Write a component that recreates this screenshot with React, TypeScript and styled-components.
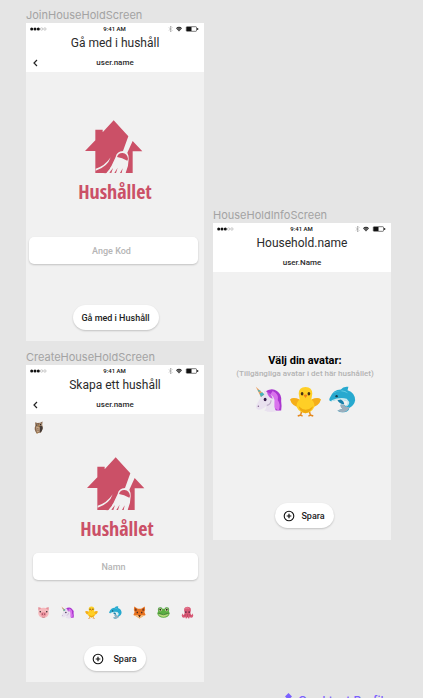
import React from "react";
import styled, { createGlobalStyle } from "styled-components";

const GlobalStyle = createGlobalStyle`
  * { box-sizing: border-box; }
  body { margin: 0; background: #e5e5e5; font-family: Roboto, "Liberation Sans", sans-serif; color: #2b2b2b; }
  h1, h2, p { margin: 0; }
`;

const Board = styled.main`
  display: grid;
  grid-template-columns: 1fr 1fr;
  column-gap: 9px;
  height: 100vh;
  overflow: hidden;
  padding: 8px 32px 0 26px;
`;
const Column = styled.div<{ $top?: number }>`
  display: flex;
  flex-direction: column;
  min-width: 0;
  padding-top: ${(p) => p.$top ?? 0}px;
`;
const FrameName = styled.p`
  font: 400 11px/15px Inter, sans-serif;
  color: #a3a3a3;
  white-space: nowrap;
`;
const Phone = styled.section<{ $pad: number }>`
  display: flex;
  flex-direction: column;
  align-items: stretch;
  background: #f1f1f1;
  margin-bottom: 9px;
  padding-bottom: ${(p) => p.$pad}px;
`;
const Header = styled.header`
  background: #fff;
  height: 49px;
  display: flex;
  flex-direction: column;
`;
const StatusBar = styled.div`
  display: grid;
  grid-template-columns: 1fr auto 1fr;
  align-items: center;
  height: 12px;
  padding: 0 5px 0 4px;
  font: 500 6px/12px Roboto, sans-serif;
  color: #111;
`;
const StatusIcons = styled.svg`
  justify-self: end;
  display: block;
`;
const Title = styled.h1`
  font-size: 12px;
  line-height: 16px;
  font-weight: 400;
  text-align: center;
`;
const UserRow = styled.div`
  display: grid;
  grid-template-columns: 20px 1fr 20px;
  align-items: center;
  height: 19px;
  margin-top: 2px;
`;
const UserName = styled.h2`
  font-size: 8px;
  line-height: 12px;
  font-weight: 500;
  text-align: center;
`;
const BackButton = styled.button`
  border: 0;
  background: none;
  padding: 0 0 0 6px;
  height: 16px;
  display: flex;
  align-items: center;
`;
const LogoBlock = styled.div<{ $top: number; $bottom: number; $shift?: number }>`
  display: flex;
  flex-direction: column;
  align-items: center;
  padding: ${(p) => p.$top}px 0 ${(p) => p.$bottom}px ${(p) => p.$shift ?? 0}px;
`;
const LogoName = styled.p`
  margin-top: 5px;
  font: 700 20px/25px "Liberation Sans Narrow", "Open Sans Condensed", "Liberation Sans", sans-serif;
  color: #cb5067;
`;
const Field = styled.input<{ $left: number }>`
  margin: 0 6px 0 ${(p) => p.$left}px;
  height: 27px;
  min-width: 0;
  border: 0;
  border-radius: 5px;
  background: #fff;
  box-shadow: 0 1px 2px rgba(0, 0, 0, 0.2);
  padding: 0 4px 0 0;
  text-align: center;
  font: 500 9px/12px Roboto, sans-serif;
  &::placeholder { color: #b5b5b5; opacity: 1; }
`;
const PillButton = styled.button<{ $gap?: number; $top: number; $shift?: number }>`
  align-self: center;
  display: flex;
  align-items: center;
  justify-content: center;
  gap: ${(p) => p.$gap ?? 0}px;
  margin-top: ${(p) => p.$top}px;
  margin-left: ${(p) => p.$shift ?? 0}px;
  height: 25px;
  padding: 0 9px 0 8px;
  border: 0;
  border-radius: 13px;
  background: #fff;
  box-shadow: 0 1px 2px rgba(0, 0, 0, 0.2);
  color: #222;
  font: 500 9px/12px Roboto, sans-serif;
  white-space: nowrap;
`;
const AvatarRow = styled.div`
  display: flex;
  justify-content: space-between;
  padding: 0 10px 0 11px;
  margin-top: 26px;
`;
const SelectedAvatar = styled.div`
  padding: 5px 0 0 6px;
  height: 19px;
`;
const Picker = styled.div`
  display: flex;
  flex-direction: column;
  align-items: center;
  padding: 81px 0 0 6px;
`;
const PickerTitle = styled.h2`
  font-size: 11px;
  line-height: 16px;
  font-weight: 700;
  color: #000;
`;
const PickerHint = styled.p`
  font-size: 8px;
  line-height: 10px;
  font-weight: 500;
  color: #b3b3b3;
  white-space: nowrap;
`;
const PickerChoices = styled.div`
  display: flex;
  gap: 8px;
  margin-top: 7px;
`;
const Avatar = styled.button`
  display: flex;
  padding: 0;
  border: 0;
  background: none;
`;
const ComponentName = styled.p`
  display: flex;
  align-items: flex-start;
  gap: 6px;
  margin-top: 144px;
  padding-left: 72px;
  font: 500 12px/15px Inter, sans-serif;
  color: #7b61ff;
  white-space: nowrap;
`;

const Battery = () => (
  <StatusIcons width="32" height="8" viewBox="0 0 32 8" aria-hidden="true">
    <path d="M2 2.5l3 3L3.5 7V1L5 2.5l-3 3" fill="none" stroke="#999" strokeWidth=".6" />
    <path d="M9 3.2Q12 .4 15 3.2L12 6.6Z" fill="#222" />
    <path d="M9.7 4Q12 2 14.3 4M10.8 5.1Q12 4.2 13.2 5.1" fill="none" stroke="#fff" strokeWidth=".4" />
    <rect x="19.3" y="1.7" width="10.2" height="4.6" rx=".7" fill="#fff" stroke="#222" strokeWidth=".6" />
    <path d="M19.5 2h5v4h-5zM30.2 3h1v2h-1z" fill="#111" />
  </StatusIcons>
);
const Signal = () => (
  <svg width="18" height="6" viewBox="0 0 18 6" aria-hidden="true">
    {[1.7, 5, 8.3].map((x) => <circle key={x} cx={x} cy="3" r="1.5" fill="#111" />)}
    {[11.6, 14.9].map((x) => <circle key={x} cx={x} cy="3" r="1.2" fill="none" stroke="#999" strokeWidth=".5" />)}
  </svg>
);

function ScreenHeader({ title, user, back }: { title: string; user: string; back?: boolean }) {
  return (
    <Header>
      <StatusBar><Signal /><span>9:41 AM</span><Battery /></StatusBar>
      <Title>{title}</Title>
      <UserRow>
        {back ? (
          <BackButton aria-label="Tillbaka">
            <svg width="7" height="8" viewBox="0 0 7 8"><path d="M5 1L2 4l3 3" fill="none" stroke="#222" strokeWidth="1.2" /></svg>
          </BackButton>
        ) : <span />}
        <UserName>{user}</UserName>
      </UserRow>
    </Header>
  );
}

function Logo({ top, bottom, shift }: { top: number; bottom: number; shift?: number }) {
  return (
    <LogoBlock $top={top} $bottom={bottom} $shift={shift}>
      <svg width="61" height="54" viewBox="44 31 183 162" aria-hidden="true">
        <path d="M130 32L174 80L158 124Q139 126 136 142Q126 169 108 190H75V124H44L75 92V60H97V68Z" fill="#cb5067" />
        <path d="M187 94L216 125H187V190H166Q175 169 175 149Q176 138 171 129Z" fill="#cb5067" />
        <path d="M140 142Q144 129 157 130Q171 132 173 147Q172 151 171 153Q155 144 140 142Z" fill="#cb5067" />
        <path d="M76 177Q103 170 121 143Q112 172 76 183Z" fill="#f1f1f1" />
        <path d="M76 188Q105 182 126 152L118 178L106 191Z" fill="#cb5067" />
        <path d="M117 189L128 175L123 190ZM132 190L142 174L137 190ZM149 190L157 176L154 190Z" fill="#cb5067" />
      </svg>
      <LogoName>Hushållet</LogoName>
    </LogoBlock>
  );
}

const PlusCircle = () => (
  <svg width="12" height="12" viewBox="0 0 12 12" aria-hidden="true">
    <circle cx="6" cy="6" r="4.8" fill="none" stroke="#111" strokeWidth="1.1" />
    <path d="M6 3.7v4.6M3.7 6h4.6" stroke="#111" strokeWidth="1.2" />
  </svg>
);

const drawings: Record<string, React.ReactNode> = {
  gris: (
    <>
      <path d="M3 3Q9 2 13 8L6 14Q2 9 3 3ZM29 3Q23 2 19 8L26 14Q30 9 29 3Z" fill="#e58f98" />
      <ellipse cx="16" cy="17" rx="13" ry="12.5" fill="#f6b9bd" />
      <ellipse cx="16" cy="20" rx="7" ry="5" fill="#ec929e" />
      <path d="M12 18h2v4h-2zM18 18h2v4h-2z" fill="#914254" />
      <circle cx="8" cy="14" r="1.8" fill="#2b2024" /><circle cx="24" cy="14" r="1.8" fill="#2b2024" />
      <path d="M12 27q4 2 8 0" stroke="#a95060" strokeWidth="1.3" fill="none" />
    </>
  ),
  enhörning: (
    <>
      <path d="M11 7Q20 1 26 6Q32 10 31 18Q32 24 31 29H18L13 15Z" fill="#a936cf" />
      <path d="M21 6Q29 10 27 17Q31 22 28 29L21 25L18 10Z" fill="#d972ed" />
      <path d="M10 9L12 5L16 9Q24 12 23 20Q22 25 25 30Q18 32 11 29Q14 27 13 24Q9 28 4 28Q0 27 2 22L7 13Z" fill="#e9e1ef" />
      <path d="M14 23Q19 22 19 17" fill="none" stroke="#bdacc9" strokeWidth="1.3" />
      <path d="M14 7Q16 14 21 15Q19 8 14 7Z" fill="#c257df" />
      <path d="M1 1L7 13L11 10Z" fill="#ef9d5b" />
      <path d="M3 4L4.5 7L7 6ZM5.5 9L7 13L11 10L8.7 7.5Z" fill="#45b5bd" />
      <ellipse cx="12" cy="16" rx="1.7" ry="2" fill="#321b47" />
      <circle cx="4" cy="24" r=".9" fill="#80618d" />
    </>
  ),
  kyckling: (
    <>
      <path d="M12 26l-1 4-3 1M20 26l1 4 3 1M11 30l2 1M21 30l-2 1" fill="none" stroke="#e48920" strokeWidth="1.5" />
      <path d="M10 14Q3 11 0 14Q2 21 10 22ZM22 14Q29 11 32 14Q30 21 22 22Z" fill="#f5ae19" />
      <path d="M9 8Q9 1 16 1Q23 1 23 8L22 14Q26 17 25 22Q22 28 16 28Q10 28 7 22Q6 17 10 14Z" fill="#ffcf26" />
      <path d="M9 21Q16 28 24 21Q22 27 16 28Q10 27 9 21Z" fill="#efa912" />
      <ellipse cx="12.5" cy="8" rx="1.4" ry="1.8" fill="#463113" /><ellipse cx="19.5" cy="8" rx="1.4" ry="1.8" fill="#463113" />
      <path d="M14 9.5Q16 8 18 9.5L16 12.5Z" fill="#f08319" />
    </>
  ),
  delfin: (
    <>
      <path d="M3 18Q-1 18 1 14Q5 4 14 4Q17 0 23 1L22 5Q31 8 31 17Q30 23 24 26Q24 30 18 31Q13 32 10 29L16 27Q13 25 14 22Q19 22 20 24Q24 21 22 18Q13 14 3 18Z" fill="#27a9cf" />
      <path d="M3 17Q12 13 21 15L24 19Q24 23 20 25Q23 21 21 18Q14 15 3 18Z" fill="#c7e9ef" />
      <path d="M5 9Q13 3 23 9Q18 4 13 6Q7 6 5 9Z" fill="#6dd1e8" />
      <path d="M14 16Q18 18 18 22Q12 21 10 17Z" fill="#1780aa" />
      <path d="M24 25Q23 31 16 31Q12 31 10 29L16 27Q13 25 14 22Q19 22 20 25Z" fill="#9caebc" />
      <circle cx="9" cy="12" r="1.4" fill="#173d50" />
    </>
  ),
  räv: (
    <>
      <path d="M3 1L12 7H20L29 1Q31 9 28 15L31 22L24 25L16 31L8 25L1 22L4 15Q1 9 3 1Z" fill="#e8721f" />
      <path d="M5 5L10 10L6 13ZM27 5L22 10L26 13Z" fill="#5c3228" />
      <path d="M3 23L11 22L16 26L21 22L29 23L24 26L16 31L8 26Z" fill="#f6bd7b" />
      <path d="M13 23h6l-3 5ZM9 14h3v4H9zM20 14h3v4h-3z" fill="#3a2521" />
    </>
  ),
  groda: (
    <>
      <circle cx="8" cy="9" r="6" fill="#45993a" /><circle cx="24" cy="9" r="6" fill="#45993a" />
      <ellipse cx="16" cy="18" rx="15" ry="11" fill="#5bae43" />
      <circle cx="8" cy="9" r="3.7" fill="#f5f4bc" /><circle cx="24" cy="9" r="3.7" fill="#f5f4bc" />
      <circle cx="8" cy="9" r="2.4" fill="#202b1a" /><circle cx="24" cy="9" r="2.4" fill="#202b1a" />
      <path d="M3 18Q16 24 29 18Q28 26 16 27Q4 26 3 18Z" fill="#b6d77b" />
      <path d="M3 18Q16 25 29 18" fill="none" stroke="#28692c" strokeWidth="1.6" />
    </>
  ),
  bläckfisk: (
    <>
      <path d="M9 17Q4 2 16 2Q28 2 23 17L25 22Q28 22 28 18Q32 23 29 27Q26 31 21 27Q22 31 18 31L16 27L14 31Q10 31 11 27Q6 31 3 27Q0 23 4 18Q4 22 7 22Z" fill="#d85a76" />
      <path d="M8 24Q12 24 12 20M24 24Q20 24 20 20M16 20v7" fill="none" stroke="#b73e5d" strokeWidth="1.6" />
      <ellipse cx="12" cy="15" rx="1.7" ry="2.2" fill="#392135" /><ellipse cx="20" cy="15" rx="1.7" ry="2.2" fill="#392135" />
      <path d="M11 6Q15 3 19 6" stroke="#f193a5" strokeWidth="2" fill="none" />
    </>
  ),
  uggla: (
    <>
      <path d="M8 3L13 5L20 4L26 1L25 10Q29 18 22 28L11 30Q4 20 8 12Z" fill="#84644c" />
      <path d="M19 12Q27 11 26 19Q25 25 20 29Z" fill="#443b37" />
      <path d="M10 15Q15 12 19 16L18 27L12 28Z" fill="#c3a586" />
      <circle cx="12" cy="10" r="3.5" fill="#c5ac8e" /><circle cx="21" cy="9" r="3.5" fill="#c5ac8e" />
      <circle cx="12" cy="10" r="2" fill="#30231f" /><circle cx="21" cy="9" r="2" fill="#30231f" />
      <path d="M15 11l4-1-2 5ZM11 29h4v2h-4z" fill="#b88642" />
      <path d="M12 18l5 2M12 22l5 2" stroke="#765741" strokeWidth="1.4" />
    </>
  ),
};

function Animal({ name, size }: { name: string; size: number }) {
  return <svg width={size} height={size} viewBox="0 0 32 32" aria-hidden="true">{drawings[name]}</svg>;
}

const animals = ["gris", "enhörning", "kyckling", "delfin", "räv", "groda", "bläckfisk"];

export default function App() {
  return (
    <>
      <GlobalStyle />
      <Board>
        <Column>
          <FrameName>JoinHouseHoldScreen</FrameName>
          <Phone $pad={11}>
            <ScreenHeader title="Gå med i hushåll" user="user.name" back />
            <Logo top={48} bottom={33} />
            <Field $left={3} placeholder="Ange Kod" aria-label="Ange Kod" />
            <PillButton $top={41} $shift={2}>Gå med i Hushåll</PillButton>
          </Phone>
          <FrameName>CreateHouseHoldScreen</FrameName>
          <Phone $pad={11}>
            <ScreenHeader title="Skapa ett hushåll" user="user.name" back />
            <SelectedAvatar><Animal name="uggla" size={13} /></SelectedAvatar>
            <Logo top={24} bottom={12} shift={4} />
            <Field $left={7} placeholder="Namn" aria-label="Namn" />
            <AvatarRow>
              {animals.map((name) => (
                <Avatar key={name} aria-label={name}><Animal name={name} size={13} /></Avatar>
              ))}
            </AvatarRow>
            <PillButton $top={27} $gap={9}><PlusCircle />Spara</PillButton>
          </Phone>
        </Column>
        <Column $top={200}>
          <FrameName>HouseHoldInfoScreen</FrameName>
          <Phone $pad={12}>
            <ScreenHeader title="Household.name" user="user.Name" />
            <Picker>
              <PickerTitle>Välj din avatar:</PickerTitle>
              <PickerHint>(Tillgängliga avatar i det här hushållet)</PickerHint>
              <PickerChoices>
                <Avatar aria-label="enhörning"><Animal name="enhörning" size={27} /></Avatar>
                <Avatar aria-label="kyckling"><Animal name="kyckling" size={31} /></Avatar>
                <Avatar aria-label="delfin"><Animal name="delfin" size={27} /></Avatar>
              </PickerChoices>
            </Picker>
            <PillButton $top={86} $gap={6} $shift={5}><PlusCircle />Spara</PillButton>
          </Phone>
          <ComponentName>
            <svg width="7" height="7" viewBox="0 0 8 8" aria-hidden="true"><path d="M4 0l2 2-2 2-2-2zM4 4l2 2-2 2-2-2zM2 2l2 2-2 2-2-2zM6 2l2 2-2 2-2-2z" fill="#7b61ff" /></svg>
            Card text Profil
          </ComponentName>
        </Column>
      </Board>
    </>
  );
}
